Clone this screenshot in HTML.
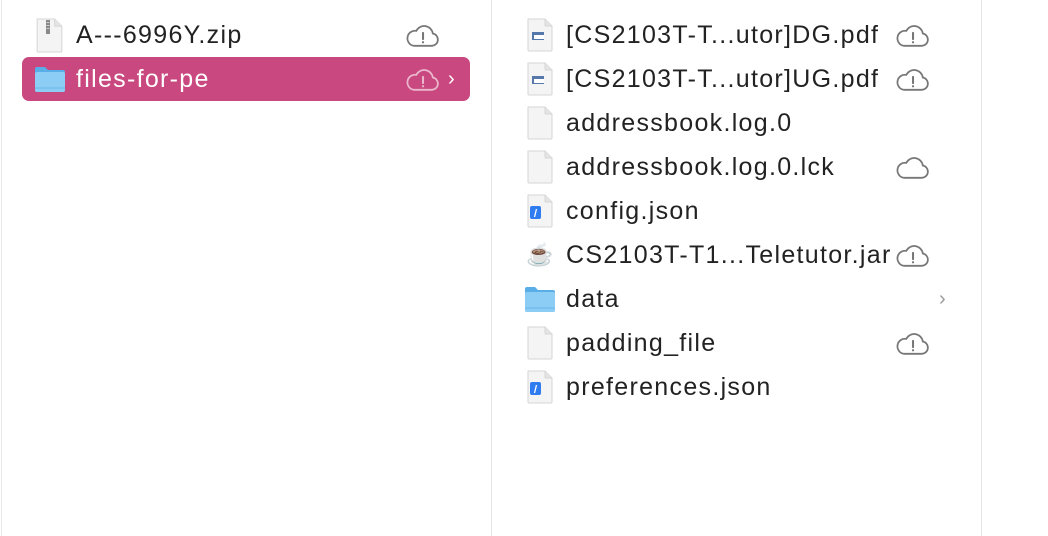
<!DOCTYPE html>
<html><head><meta charset="utf-8"><style>
html,body{margin:0;padding:0;width:1048px;height:536px;overflow:hidden;background:#fff;font-family:"Liberation Sans",Arial,sans-serif}
.ln{position:absolute;top:0;width:1px;height:536px;background:#e3e3e3}
.row{position:absolute;height:44px;left:0;right:0}
.t{position:absolute;top:0;line-height:44px;font-size:25px;color:#222;white-space:nowrap;letter-spacing:1.3px}
.ic{position:absolute}
.sel{position:absolute;left:22px;top:57px;width:448px;height:44px;background:#c9487f;border-radius:7px}
</style></head><body>
<div class="ln" style="left:1px;background:#e8e8e8"></div>
<div class="ln" style="left:491px"></div>
<div class="ln" style="left:981px"></div>
<div class="sel"></div>

<svg width="0" height="0" style="position:absolute">
<defs>
<symbol id="doc" viewBox="0 0 28 34"><path d="M2 1h17l7 7v24a1 1 0 0 1-1 1H3a1 1 0 0 1-1-1z" fill="#f4f4f4" stroke="#d6d6d6"/><path d="M19 1v6a1 1 0 0 0 1 1h6" fill="#e4e4e4" stroke="#d6d6d6"/></symbol>
<symbol id="cloud" viewBox="0 0 32 24"><path d="M7.5 22h17.5a6 6 0 0 0 1-11.9A8.5 8.5 0 0 0 10 7.5a7 7 0 0 0-2.5 14.5z" fill="none" stroke="currentColor" stroke-width="1.7"/></symbol>
<symbol id="excl" viewBox="0 0 32 24"><path d="M16.5 9.5v6" stroke="currentColor" stroke-width="2" stroke-linecap="round"/><circle cx="16.5" cy="18.5" r="1.1" fill="currentColor"/></symbol>
<symbol id="folder" viewBox="0 0 32 28"><path d="M1 4a2 2 0 0 1 2-2h8l3 3h15a2 2 0 0 1 2 2v18a2 2 0 0 1-2 2H3a2 2 0 0 1-2-2z" fill="#5aaee8"/><path d="M1 9a2 2 0 0 1 2-2h26a2 2 0 0 1 2 2v16a2 2 0 0 1-2 2H3a2 2 0 0 1-2-2z" fill="#8ccdf5"/><path d="M1 23h30" stroke="#6bb8eb" stroke-width="1"/></symbol>
</defs></svg>

<!-- left column -->
<div class="row" style="top:13px">
<svg class="ic" style="left:35px;top:5px" width="29" height="35"><use href="#doc"/><rect x="11" y="2" width="4" height="14" fill="#8a8a8a"/><rect x="11.5" y="4" width="3" height="1" fill="#ccc"/><rect x="11.5" y="7" width="3" height="1" fill="#ccc"/><rect x="11.5" y="10" width="3" height="1" fill="#ccc"/></svg>
<div class="t" style="left:76px">A---6996Y.zip</div>
<svg class="ic" style="left:406px;top:10px;color:#777" width="33" height="25"><use href="#cloud"/><use href="#excl"/></svg>
</div>
<div class="row" style="top:57px">
<svg class="ic" style="left:34px;top:8px" width="32" height="28"><use href="#folder"/></svg>
<div class="t" style="left:76px;color:#fff">files-for-pe</div>
<svg class="ic" style="left:406px;top:10px;color:#eab7cd" width="33" height="25"><use href="#cloud"/><use href="#excl"/></svg>
<div class="t" style="left:448px;color:#fff;font-size:20px">›</div>
</div>

<!-- right column -->
<div class="row" style="top:13px">
<svg class="ic" style="left:526px;top:5px" width="28" height="34"><use href="#doc"/><rect x="6" y="14" width="12" height="8" fill="#5577aa"/><rect x="8" y="17" width="10" height="4" fill="#fff"/></svg>
<div class="t" style="left:566px">[CS2103T-T...utor]DG.pdf</div>
<svg class="ic" style="left:896px;top:10px;color:#777" width="33" height="25"><use href="#cloud"/><use href="#excl"/></svg>
</div>
<div class="row" style="top:57px">
<svg class="ic" style="left:526px;top:5px" width="28" height="34"><use href="#doc"/><rect x="6" y="14" width="12" height="8" fill="#5577aa"/><rect x="8" y="17" width="10" height="4" fill="#fff"/></svg>
<div class="t" style="left:566px">[CS2103T-T...utor]UG.pdf</div>
<svg class="ic" style="left:896px;top:10px;color:#777" width="33" height="25"><use href="#cloud"/><use href="#excl"/></svg>
</div>
<div class="row" style="top:101px">
<svg class="ic" style="left:526px;top:5px" width="28" height="34"><use href="#doc"/></svg>
<div class="t" style="left:566px">addressbook.log.0</div>
</div>
<div class="row" style="top:145px">
<svg class="ic" style="left:526px;top:5px" width="28" height="34"><use href="#doc"/></svg>
<div class="t" style="left:566px">addressbook.log.0.lck</div>
<svg class="ic" style="left:896px;top:10px;color:#777" width="33" height="25"><use href="#cloud"/></svg>
</div>
<div class="row" style="top:189px">
<svg class="ic" style="left:526px;top:5px" width="28" height="34"><use href="#doc"/><rect x="4" y="12" width="11" height="13" rx="2" fill="#2f7bf0"/><path d="M10.5 15l-2 8" stroke="#fff" stroke-width="1.3"/></svg>
<div class="t" style="left:566px">config.json</div>
</div>
<div class="row" style="top:233px">
<div class="t" style="left:526px;font-size:22px;letter-spacing:0">☕</div>
<div class="t" style="left:566px">CS2103T-T1...Teletutor.jar</div>
<svg class="ic" style="left:896px;top:10px;color:#777" width="33" height="25"><use href="#cloud"/><use href="#excl"/></svg>
</div>
<div class="row" style="top:277px">
<svg class="ic" style="left:524px;top:8px" width="32" height="28"><use href="#folder"/></svg>
<div class="t" style="left:566px">data</div>
<div class="t" style="left:939px;color:#999;font-size:20px">›</div>
</div>
<div class="row" style="top:321px">
<svg class="ic" style="left:526px;top:5px" width="28" height="34"><use href="#doc"/></svg>
<div class="t" style="left:566px">padding_file</div>
<svg class="ic" style="left:896px;top:10px;color:#777" width="33" height="25"><use href="#cloud"/><use href="#excl"/></svg>
</div>
<div class="row" style="top:365px">
<svg class="ic" style="left:526px;top:5px" width="28" height="34"><use href="#doc"/><rect x="4" y="12" width="11" height="13" rx="2" fill="#2f7bf0"/><path d="M10.5 15l-2 8" stroke="#fff" stroke-width="1.3"/></svg>
<div class="t" style="left:566px">preferences.json</div>
</div>
</body></html>
